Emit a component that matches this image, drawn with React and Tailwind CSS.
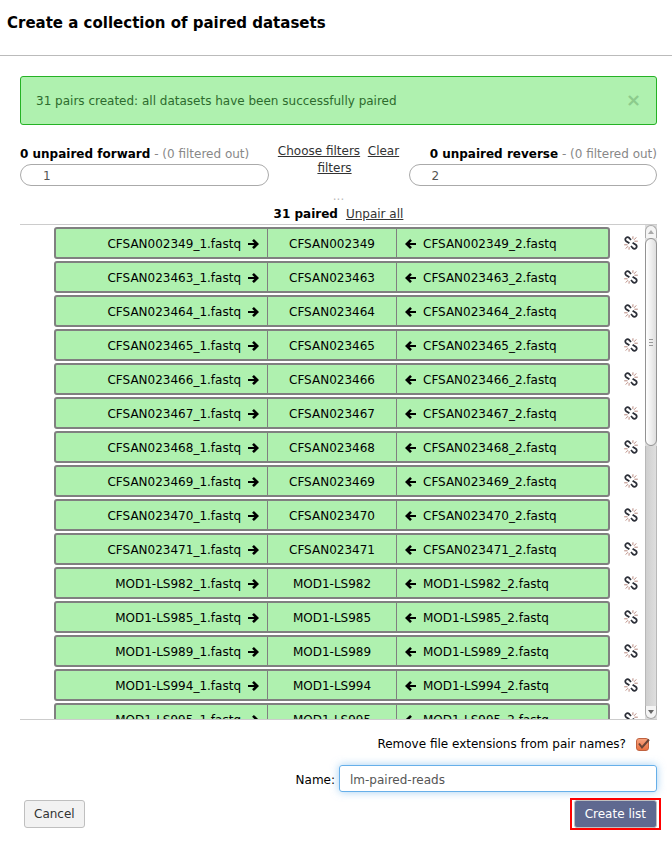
const pairs = [
  "CFSAN002349",
  "CFSAN023463",
  "CFSAN023464",
  "CFSAN023465",
  "CFSAN023466",
  "CFSAN023467",
  "CFSAN023468",
  "CFSAN023469",
  "CFSAN023470",
  "CFSAN023471",
  "MOD1-LS982",
  "MOD1-LS985",
  "MOD1-LS989",
  "MOD1-LS994",
  "MOD1-LS995",
];

function ArrowIcon({ left }) {
  return (
    <svg viewBox="0 0 11 12" className={left ? "h-3 w-[11px] rotate-180" : "h-3 w-[11px]"} fill="none" stroke="#000" aria-hidden="true">
      <path d="M.5 6h8.500" strokeWidth="2.200" strokeLinecap="round" />
      <path d="M5 1.800 9.200 6 5 10.200" strokeWidth="2.600" />
    </svg>
  );
}

function UnlinkIcon() {
  return (
    <svg viewBox="0 0 14 14" className="h-3.5 w-3.5" fill="none" aria-hidden="true">
      <path d="M8.800 2.900 9 .3M10 3.800 12.300 1.400M10.400 5.200h3.400M5.200 11.100 5 13.700M4 10.200l-2.300 2.400M3.600 8.800H.2" stroke="#b07c70" strokeWidth=".9" />
      <path d="M5.400 7.300 2.200 5.200C1 4.300 1 2.700 2 1.900 3 1 4.400 1.100 5.300 2L7 4" stroke="#2c2f38" strokeWidth="1.800" />
      <path d="m8.600 6.700 3.200 2.100c1.200.9 1.200 2.500.2 3.300-1 .9-2.400.8-3.300-.1L7 10" stroke="#2c2f38" strokeWidth="1.800" />
    </svg>
  );
}

function PairRow({ name }) {
  return (
    <li className="flex items-center">
      <div className="ml-[34px] grid h-8 min-w-0 flex-1 grid-cols-[211fr_130fr_211fr] rounded-[3px] border-2 border-[#808080] bg-[#aff1af] leading-[30px]">
        <span className="flex items-center justify-end gap-[7px] pr-2">
          {name}_1.fastq
          <ArrowIcon />
        </span>
        <span className="h-7 border-x border-[#808080] text-center">{name}</span>
        <span className="flex items-center gap-[7px] pl-2">
          <ArrowIcon left />
          {name}_2.fastq
        </span>
      </div>
      <button type="button" aria-label={`Unpair ${name}`} className="ml-3.5 mr-[7px]">
        <UnlinkIcon />
      </button>
    </li>
  );
}

function ScrollBar() {
  return (
    <div aria-hidden="true" className="flex w-3 shrink-0 flex-col bg-[#dcdcdc]">
      <div className="flex h-[13px] items-center justify-center rounded-t-full border border-b-0 border-[#aaa] bg-[#f4f4f4]">
        <svg viewBox="0 0 6 4" className="h-1 w-1.5">
          <path d="M0 4 3 0l3 4z" fill="#aaa" />
        </svg>
      </div>
      <div className="flex h-52 flex-col items-center justify-center gap-0.5 rounded-full border border-[#929292] bg-linear-to-r from-white to-[#dedede]">
        <i className="h-px w-1 bg-[#999]" />
        <i className="h-px w-1 bg-[#999]" />
        <i className="h-px w-1 bg-[#999]" />
      </div>
      <div className="flex-1 border-x border-[#b8b8b8] bg-linear-to-r from-[#cfcfcf] to-[#dedede]" />
      <div className="flex h-[13px] items-center justify-center rounded-b-full border border-t-0 border-[#aaa] bg-[#f4f4f4]">
        <svg viewBox="0 0 6 4" className="h-1 w-1.5">
          <path d="M0 0h6L3 4z" fill="#666" />
        </svg>
      </div>
    </div>
  );
}

function Unpaired({ direction, value, align }) {
  return (
    <div className="min-w-0 flex-1 pt-[3px]">
      <label htmlFor={direction} className={`block whitespace-nowrap leading-[18px] ${align}`}>
        <strong className="text-black">0 unpaired {direction}</strong>
        <span className="text-[#888]"> - (0 filtered out)</span>
      </label>
      <input
        id={direction}
        defaultValue={value}
        className="mt-px block h-[22px] w-full rounded-full border border-[#aaa] pt-0.5 pl-[22px] text-[#555] outline-none"
      />
    </div>
  );
}

export default function App() {
  return (
    <main className="bg-white pb-[15px] font-['DejaVu_Sans',sans-serif] text-xs text-black">
      <header className="border-b border-[#bbb] px-[7px] pt-3 pb-5">
        <h1 className="text-[15px] leading-[23px] font-bold">Create a collection of paired datasets</h1>
      </header>
      <div className="pr-[15px] pl-5">
        <div role="status" className="mt-5 flex h-[49px] items-center justify-between rounded-[3px] border border-[#25b225] bg-[#aff1af] px-[15px] text-[#2d6b2d]">
          <span>31 pairs created: all datasets have been successfully paired</span>
          <button type="button" aria-label="Dismiss" className="pb-0.5 text-lg font-bold text-[#8ccb8c]">×</button>
        </div>

        <section className="mt-[17px] flex">
          <Unpaired direction="forward" value="1" align="text-left" />
          <div className="w-[140px] shrink-0 px-2 pt-px text-center leading-[17px] text-[#333]">
            <a href="#choose" className="underline">Choose filters</a>
            {"\u00a0 "}
            <a href="#clear" className="mr-2 underline">Clear filters</a>
          </div>
          <Unpaired direction="reverse" value="2" align="text-right" />
        </section>

        <div className="mt-1 text-center leading-3 text-[#bbb]">...</div>
        <div className="mt-0.5 text-center leading-5">
          <strong>31 paired</strong>
          <a href="#unpair" className="ml-2 text-[#333] underline">Unpair all</a>
        </div>

        <section className="flex h-[496px] border-y border-[#ccc]">
          <ul className="min-w-0 flex-1 space-y-0.5 overflow-y-auto pt-0.5 [scrollbar-width:none]">
            {pairs.map((name) => (
              <PairRow key={name} name={name} />
            ))}
          </ul>
          <ScrollBar />
        </section>

        <div className="mt-4 flex items-center justify-end gap-2.5 pr-2">
          <label htmlFor="remove">Remove file extensions from pair names?</label>
          <span className="relative flex h-[13px] w-[13px]">
            <input
              id="remove"
              type="checkbox"
              defaultChecked
              className="h-[13px] w-[13px] appearance-none rounded-[3px] border border-[#c0623f] bg-linear-to-b from-[#f7a27e] to-[#e9703f]"
            />
            <svg viewBox="0 0 14 13" className="pointer-events-none absolute inset-0 h-[13px] w-3.5" fill="none" aria-hidden="true">
              <path d="M3 5.500 6 9.500 13 1.500" stroke="#6b4436" strokeWidth="2" />
            </svg>
          </span>
        </div>

        <div className="mt-[13px] flex items-center justify-end gap-1">
          <label htmlFor="name" className="pt-0.5">Name:</label>
          <input
            id="name"
            defaultValue="lm-paired-reads"
            className="h-[27px] w-[318px] rounded-[3px] border border-[#66afe9] px-2.5 pt-0.5 text-[#555] shadow-[0_0_8px_rgba(102,175,233,0.6)] outline-none"
          />
        </div>

        <footer className="mt-1.5 -mr-1 flex items-center justify-between pl-1">
          <button type="button" className="h-7 rounded-[3px] border border-[#bfbfbf] bg-[#f2f2f2] px-[9px] text-[#333]">Cancel</button>
          <div className="border-2 border-[#f00] px-0.5">
            <button type="button" className="block h-7 rounded-[3px] border border-[#bfbfbf] bg-[#5f6990] px-2.5 text-white">Create list</button>
          </div>
        </footer>
      </div>
    </main>
  );
}
